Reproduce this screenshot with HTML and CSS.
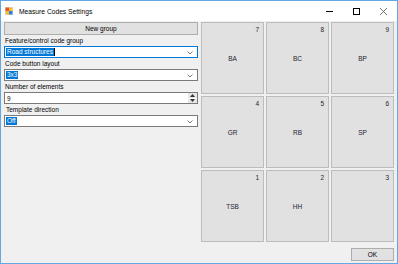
FILE: index.html
```html
<!DOCTYPE html>
<html>
<head>
    <meta charset="UTF-8">
    <title>Measure Codes Settings</title>
    <link rel="stylesheet" href="styles.css">
</head>
<body>
    <div class="window">
        <div class="titlebar">
            <svg class="app-icon" width="8" height="8" viewBox="0 0 8 8">
                <rect x="0" y="0" width="8" height="8" fill="#d9d9d9"/>
                <rect x="0.5" y="0.5" width="3.5" height="3.5" fill="#e8542a"/>
                <rect x="4" y="0.5" width="3.5" height="3.5" fill="#f5c02c"/>
                <rect x="0.5" y="4" width="3.5" height="3.5" fill="#f5c02c"/>
                <rect x="4" y="4" width="3.5" height="3.5" fill="#2f7fd6"/>
            </svg>
            <span class="title">Measure Codes Settings</span>
            <div class="caption-buttons">
                <span class="cap">
                    <svg width="7" height="7" viewBox="0 0 7 7"><line x1="0" y1="3.5" x2="7" y2="3.5" stroke="#000" stroke-width="1"/></svg>
                </span>
                <span class="cap">
                    <svg width="7" height="7" viewBox="0 0 7 7"><rect x="0.5" y="0.5" width="6" height="6" fill="none" stroke="#000" stroke-width="1"/></svg>
                </span>
                <span class="cap">
                    <svg width="7" height="7" viewBox="0 0 7 7"><path d="M0 0 L7 7 M7 0 L0 7" stroke="#555" stroke-width="0.8"/></svg>
                </span>
            </div>
        </div>

        <div class="client">
            <div class="settings">
                <button class="btn new-group">New group</button>

                <label class="field-label">Feature/control code group</label>
                <div class="combo focused">
                    <span class="sel">Road structures</span><span class="caret"></span>
                    <svg class="chev" width="6" height="4" viewBox="0 0 6 4"><path d="M0.5 0.5 L3 3 L5.5 0.5" fill="none" stroke="#6a6a6a" stroke-width="0.9"/></svg>
                </div>

                <label class="field-label">Code button layout</label>
                <div class="combo">
                    <span class="sel">3x3</span>
                    <svg class="chev" width="6" height="4" viewBox="0 0 6 4"><path d="M0.5 0.5 L3 3 L5.5 0.5" fill="none" stroke="#6a6a6a" stroke-width="0.9"/></svg>
                </div>

                <label class="field-label">Number of elements</label>
                <div class="numeric">
                    <span class="value">9</span>
                    <div class="spin">
                        <span class="spin-btn"><svg width="5" height="3" viewBox="0 0 5 3"><path d="M0 3 L2.5 0 L5 3 Z" fill="#333"/></svg></span>
                        <span class="spin-btn"><svg width="5" height="3" viewBox="0 0 5 3"><path d="M0 0 L2.5 3 L5 0 Z" fill="#333"/></svg></span>
                    </div>
                </div>

                <label class="field-label indent">Template direction</label>
                <div class="combo">
                    <span class="sel">Off</span>
                    <svg class="chev" width="6" height="4" viewBox="0 0 6 4"><path d="M0.5 0.5 L3 3 L5.5 0.5" fill="none" stroke="#6a6a6a" stroke-width="0.9"/></svg>
                </div>
            </div>

            <div class="tiles">
                <div class="tile"><span class="num">7</span><span class="code">BA</span></div>
                <div class="tile"><span class="num">8</span><span class="code">BC</span></div>
                <div class="tile"><span class="num">9</span><span class="code">BP</span></div>
                <div class="tile"><span class="num">4</span><span class="code">GR</span></div>
                <div class="tile"><span class="num">5</span><span class="code">RB</span></div>
                <div class="tile"><span class="num">6</span><span class="code">SP</span></div>
                <div class="tile"><span class="num">1</span><span class="code">TSB</span></div>
                <div class="tile"><span class="num">2</span><span class="code">HH</span></div>
                <div class="tile"><span class="num">3</span><span class="code"></span></div>
            </div>

            <div class="footer">
                <button class="btn ok">OK</button>
            </div>
        </div>
    </div>
</body>
</html>
```

FILE: styles.css
```css
body {
    margin: 0;
    font-family: "Liberation Sans", Arial, sans-serif;
    font-size: 6.5px;
    color: #000;
}
.window {
    width: 398px;
    height: 264px;
    box-sizing: border-box;
    border: 1px solid #62a8e4;
    display: flex;
    flex-direction: column;
    background: #f0f0f0;
}
.titlebar {
    height: 20px;
    background: #fff;
    display: flex;
    align-items: center;
}
.app-icon {
    margin: 0 6px 1px 4px;
}
.title {
    font-size: 6.7px;
    flex: 1;
    margin-top: 1px;
}
.caption-buttons {
    display: flex;
    height: 20px;
}
.cap {
    width: 27px;
    display: flex;
    align-items: center;
    justify-content: center;
}
.client {
    flex: 1;
    display: grid;
    grid-template-columns: 194px 193px;
    grid-template-rows: 220px 1fr;
    column-gap: 3px;
    padding: 1px 0 0 3px;
}
.settings {
    display: flex;
    flex-direction: column;
}
.btn {
    font-family: inherit;
    font-size: 6.5px;
    background: #e1e1e1;
    border: 1px solid #adadad;
    padding: 0;
    color: #000;
}
.new-group {
    height: 13px;
}
.field-label {
    height: 11px;
    line-height: 12px;
    padding-left: 1px;
}
.field-label.indent {
    padding-left: 2px;
}
.combo, .numeric {
    height: 12px;
    box-sizing: border-box;
    border: 1px solid #7a7a7a;
    background: #fff;
    display: flex;
    align-items: center;
    position: relative;
}
.combo.focused {
    border-color: #0078d7;
}
.sel {
    background: #0078d7;
    color: #fff;
    line-height: 8px;
    padding: 0 1px;
    margin-left: 1px;
}
.caret {
    width: 1px;
    height: 8px;
    background: #000;
}
.chev {
    position: absolute;
    right: 4px;
    top: 4px;
}
.value {
    margin-left: 2px;
    flex: 1;
}
.spin {
    width: 9px;
    height: 10px;
    display: flex;
    flex-direction: column;
    gap: 1px;
}
.spin-btn {
    flex: 1;
    background: #e6e6e6;
    display: flex;
    align-items: center;
    justify-content: center;
}
.tiles {
    display: grid;
    grid-template-columns: repeat(3, 63px);
    grid-template-rows: repeat(3, 72px);
    gap: 2px;
}
.tile {
    box-sizing: border-box;
    border: 1px solid #bcbcbc;
    background: #e1e1e1;
    position: relative;
    display: flex;
    align-items: center;
    justify-content: center;
    color: #1e1e2e;
}
.num {
    position: absolute;
    top: 3px;
    right: 4px;
}
.code {
    margin-top: 1px;
}
.footer {
    grid-column: 1 / 3;
    display: flex;
    justify-content: flex-end;
    align-items: flex-start;
    padding-top: 6px;
}
.ok {
    width: 43px;
    height: 13px;
}
```
